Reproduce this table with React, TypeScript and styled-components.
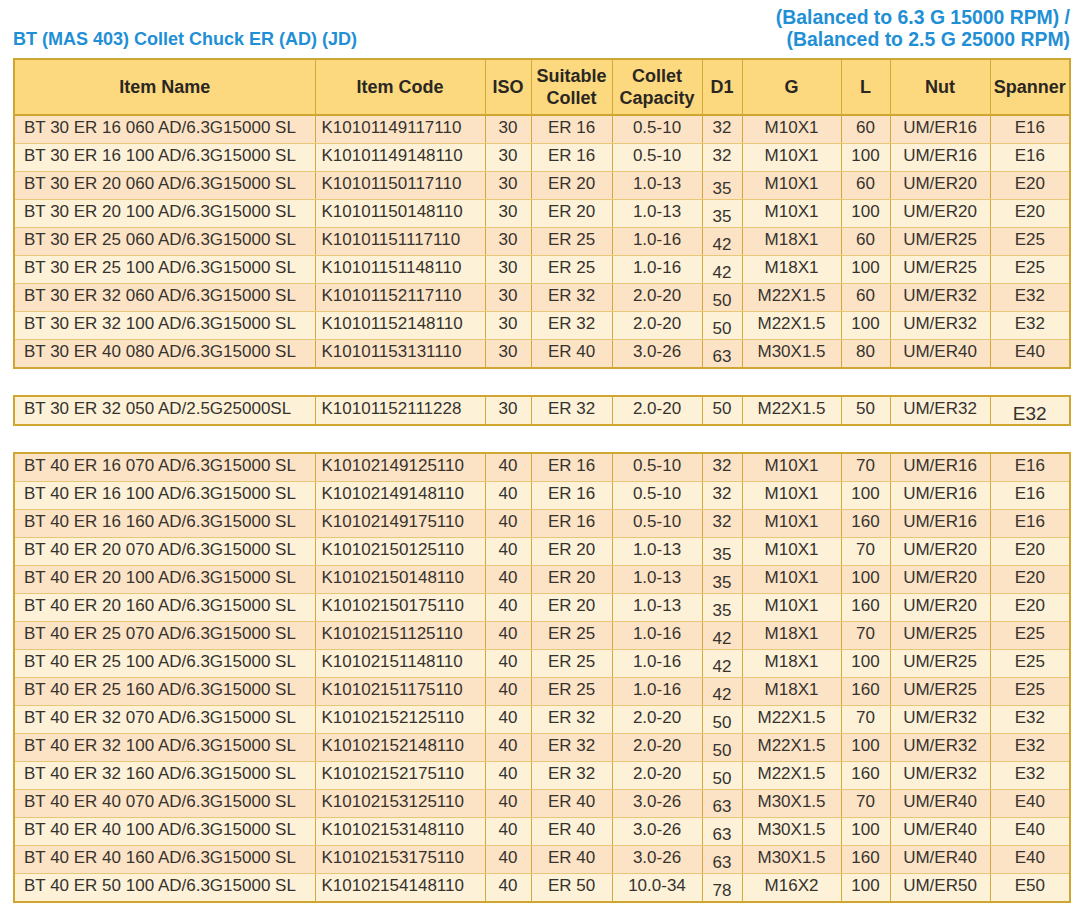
import React from 'react'
import styled, { createGlobalStyle } from 'styled-components'

type Item = {
  name: string
  code: string
  iso: string
  collet: string
  capacity: string
  d1: string
  g: string
  l: string
  nut: string
  spanner: string
}

const row = (
  name: string,
  code: string,
  iso: string,
  collet: string,
  capacity: string,
  d1: string,
  g: string,
  l: string,
  nut: string,
  spanner: string
): Item => ({ name, code, iso, collet, capacity, d1, g, l, nut, spanner })

const bt30 = [
  row('BT 30 ER 16 060 AD/6.3G15000 SL', 'K10101149117110', '30', 'ER 16', '0.5-10', '32', 'M10X1', '60', 'UM/ER16', 'E16'),
  row('BT 30 ER 16 100 AD/6.3G15000 SL', 'K10101149148110', '30', 'ER 16', '0.5-10', '32', 'M10X1', '100', 'UM/ER16', 'E16'),
  row('BT 30 ER 20 060 AD/6.3G15000 SL', 'K10101150117110', '30', 'ER 20', '1.0-13', '35', 'M10X1', '60', 'UM/ER20', 'E20'),
  row('BT 30 ER 20 100 AD/6.3G15000 SL', 'K10101150148110', '30', 'ER 20', '1.0-13', '35', 'M10X1', '100', 'UM/ER20', 'E20'),
  row('BT 30 ER 25 060 AD/6.3G15000 SL', 'K10101151117110', '30', 'ER 25', '1.0-16', '42', 'M18X1', '60', 'UM/ER25', 'E25'),
  row('BT 30 ER 25 100 AD/6.3G15000 SL', 'K10101151148110', '30', 'ER 25', '1.0-16', '42', 'M18X1', '100', 'UM/ER25', 'E25'),
  row('BT 30 ER 32 060 AD/6.3G15000 SL', 'K10101152117110', '30', 'ER 32', '2.0-20', '50', 'M22X1.5', '60', 'UM/ER32', 'E32'),
  row('BT 30 ER 32 100 AD/6.3G15000 SL', 'K10101152148110', '30', 'ER 32', '2.0-20', '50', 'M22X1.5', '100', 'UM/ER32', 'E32'),
  row('BT 30 ER 40 080 AD/6.3G15000 SL', 'K10101153131110', '30', 'ER 40', '3.0-26', '63', 'M30X1.5', '80', 'UM/ER40', 'E40'),
]

const bt30Fine = [
  row('BT 30 ER 32 050 AD/2.5G25000SL', 'K10101152111228', '30', 'ER 32', '2.0-20', '50', 'M22X1.5', '50', 'UM/ER32', 'E32'),
]

const bt40 = [
  row('BT 40 ER 16 070 AD/6.3G15000 SL', 'K10102149125110', '40', 'ER 16', '0.5-10', '32', 'M10X1', '70', 'UM/ER16', 'E16'),
  row('BT 40 ER 16 100 AD/6.3G15000 SL', 'K10102149148110', '40', 'ER 16', '0.5-10', '32', 'M10X1', '100', 'UM/ER16', 'E16'),
  row('BT 40 ER 16 160 AD/6.3G15000 SL', 'K10102149175110', '40', 'ER 16', '0.5-10', '32', 'M10X1', '160', 'UM/ER16', 'E16'),
  row('BT 40 ER 20 070 AD/6.3G15000 SL', 'K10102150125110', '40', 'ER 20', '1.0-13', '35', 'M10X1', '70', 'UM/ER20', 'E20'),
  row('BT 40 ER 20 100 AD/6.3G15000 SL', 'K10102150148110', '40', 'ER 20', '1.0-13', '35', 'M10X1', '100', 'UM/ER20', 'E20'),
  row('BT 40 ER 20 160 AD/6.3G15000 SL', 'K10102150175110', '40', 'ER 20', '1.0-13', '35', 'M10X1', '160', 'UM/ER20', 'E20'),
  row('BT 40 ER 25 070 AD/6.3G15000 SL', 'K10102151125110', '40', 'ER 25', '1.0-16', '42', 'M18X1', '70', 'UM/ER25', 'E25'),
  row('BT 40 ER 25 100 AD/6.3G15000 SL', 'K10102151148110', '40', 'ER 25', '1.0-16', '42', 'M18X1', '100', 'UM/ER25', 'E25'),
  row('BT 40 ER 25 160 AD/6.3G15000 SL', 'K10102151175110', '40', 'ER 25', '1.0-16', '42', 'M18X1', '160', 'UM/ER25', 'E25'),
  row('BT 40 ER 32 070 AD/6.3G15000 SL', 'K10102152125110', '40', 'ER 32', '2.0-20', '50', 'M22X1.5', '70', 'UM/ER32', 'E32'),
  row('BT 40 ER 32 100 AD/6.3G15000 SL', 'K10102152148110', '40', 'ER 32', '2.0-20', '50', 'M22X1.5', '100', 'UM/ER32', 'E32'),
  row('BT 40 ER 32 160 AD/6.3G15000 SL', 'K10102152175110', '40', 'ER 32', '2.0-20', '50', 'M22X1.5', '160', 'UM/ER32', 'E32'),
  row('BT 40 ER 40 070 AD/6.3G15000 SL', 'K10102153125110', '40', 'ER 40', '3.0-26', '63', 'M30X1.5', '70', 'UM/ER40', 'E40'),
  row('BT 40 ER 40 100 AD/6.3G15000 SL', 'K10102153148110', '40', 'ER 40', '3.0-26', '63', 'M30X1.5', '100', 'UM/ER40', 'E40'),
  row('BT 40 ER 40 160 AD/6.3G15000 SL', 'K10102153175110', '40', 'ER 40', '3.0-26', '63', 'M30X1.5', '160', 'UM/ER40', 'E40'),
  row('BT 40 ER 50 100 AD/6.3G15000 SL', 'K10102154148110', '40', 'ER 50', '10.0-34', '78', 'M16X2', '100', 'UM/ER50', 'E50'),
]

const widths = [301, 170, 46, 81, 90, 40, 99, 49, 100, 80]

const GlobalStyle = createGlobalStyle`
  body{
    margin: 0;
    background: #ffffff;
    font-family: "Liberation Sans", Arial, sans-serif;
  }
`

const Page = styled.div`
  width: 1056px;
  padding: 6px 0 0 13px;
`

const Heading = styled.div`
  display: flex;
  justify-content: space-between;
  align-items: flex-end;
  margin-bottom: 8px;
  color: #1f8fd6;
  font-weight: 700;
  line-height: 22px;
  h1{
    font-size: 18px;
    margin: 0;
  }
`

const Balance = styled.div`
  text-align: right;
  font-size: 19.4px;
  margin-right: -1px;
`

const Table = styled.table<{ $gap?: boolean }>`
  width: 1056px;
  table-layout: fixed;
  border-collapse: collapse;
  border: 2px solid #cfa62f;
  margin-top: ${(p) => (p.$gap ? '26px' : '0')};
  color: #36332f;
`

const HeadCell = styled.th`
  background: #fcd97e;
  border: 1.5px solid #d2aa3a;
  border-bottom: 2px solid #cfa62f;
  height: 54px;
  padding: 0 2px;
  font-size: 18px;
  line-height: 22px;
  font-weight: 700;
  color: #2a2723;
  text-align: center;
`

const Row = styled.tr<{ $tone: 'peach' | 'cream' }>`
  background: ${(p) => (p.$tone === 'peach' ? '#fde3c5' : '#fdf1d7')};
`

const Cell = styled.td<{ $align?: 'left' | 'center'; $low?: boolean; $big?: boolean }>`
  height: 24px;
  padding: ${(p) => (p.$low ? '0' : '0 0 3px 0')};
  padding-left: ${(p) => (p.$align === 'left' ? '9px' : '0')};
  vertical-align: ${(p) => (p.$low ? 'bottom' : 'middle')};
  text-align: ${(p) => p.$align ?? 'center'};
  font-size: ${(p) => (p.$big ? '19px' : '17px')};
  line-height: 20px;
  white-space: nowrap;
  overflow: hidden;
  border-left: 1.5px solid #d2aa3a;
  border-right: 1.5px solid #d2aa3a;
  border-top: 1px solid #e8c878;
  border-bottom: 1px solid #e8c878;
`

const CodeCell = styled(Cell)`
  padding-left: 6px;
`

const Head = () => (
  <thead>
    <tr>
      <HeadCell>Item Name</HeadCell>
      <HeadCell>Item Code</HeadCell>
      <HeadCell>ISO</HeadCell>
      <HeadCell>Suitable<br />Collet</HeadCell>
      <HeadCell>Collet<br />Capacity</HeadCell>
      <HeadCell>D1</HeadCell>
      <HeadCell>G</HeadCell>
      <HeadCell>L</HeadCell>
      <HeadCell>Nut</HeadCell>
      <HeadCell>Spanner</HeadCell>
    </tr>
  </thead>
)

const Cols = () => (
  <colgroup>
    {widths.map((w, i) => (
      <col key={i} style={{ width: w }} />
    ))}
  </colgroup>
)

const Body = ({ items, start, fine }: { items: Item[]; start: 'peach' | 'cream'; fine?: boolean }) => (
  <tbody>
    {items.map((item, index) => {
      const tone = (index % 2 === 0) === (start === 'peach') ? 'peach' : 'cream'
      const low = !fine && item.d1 !== '32'
      return (
        <Row key={item.code} $tone={tone}>
          <Cell $align="left">{item.name}</Cell>
          <CodeCell $align="left">{item.code}</CodeCell>
          <Cell>{item.iso}</Cell>
          <Cell>{item.collet}</Cell>
          <Cell>{item.capacity}</Cell>
          <Cell $low={low}>{item.d1}</Cell>
          <Cell>{item.g}</Cell>
          <Cell>{item.l}</Cell>
          <Cell>{item.nut}</Cell>
          <Cell $low={fine} $big={fine}>{item.spanner}</Cell>
        </Row>
      )
    })}
  </tbody>
)

const App = () => {
  return (
    <Page>
      <GlobalStyle />
      <Heading>
        <h1>BT (MAS 403) Collet Chuck ER (AD) (JD)</h1>
        <Balance>
          (Balanced to 6.3 G 15000 RPM) /<br />
          (Balanced to 2.5 G 25000 RPM)
        </Balance>
      </Heading>
      <Table>
        <Cols />
        <Head />
        <Body items={bt30} start="peach" />
      </Table>
      <Table $gap>
        <Cols />
        <Body items={bt30Fine} start="cream" fine />
      </Table>
      <Table $gap>
        <Cols />
        <Body items={bt40} start="peach" />
      </Table>
    </Page>
  )
}

export default App
